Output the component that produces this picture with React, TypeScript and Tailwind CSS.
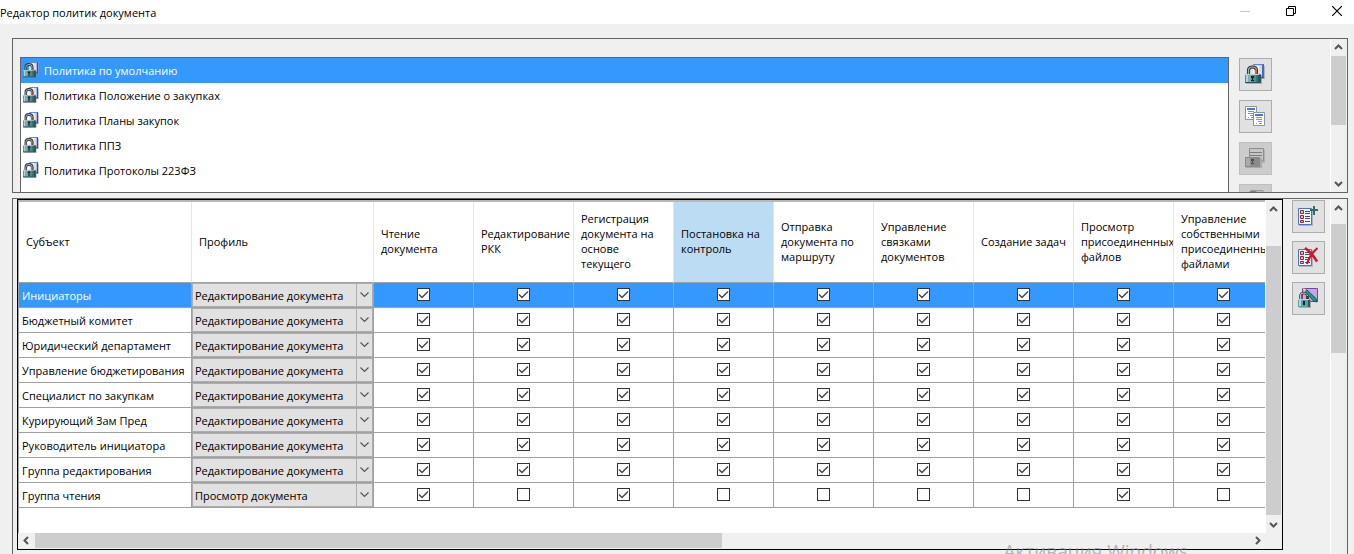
import React, { useState } from "react";

const policies = [
  "Политика по умолчанию",
  "Политика Положение о закупках",
  "Политика Планы закупок",
  "Политика ППЗ",
  "Политика Протоколы 223ФЗ",
];

const permissions = [
  "Чтение документа",
  "Редактирование РКК",
  "Регистрация документа на основе текущего",
  "Постановка на контроль",
  "Отправка документа по маршруту",
  "Управление связками документов",
  "Создание задач",
  "Просмотр присоединенных файлов",
  "Управление собственными присоединенными файлами",
];

const profiles = ["Редактирование документа", "Просмотр документа"];
const all = [true, true, true, true, true, true, true, true, true];

const subjects = [
  { name: "Инициаторы", profile: 0, rights: all },
  { name: "Бюджетный комитет", profile: 0, rights: all },
  { name: "Юридический департамент", profile: 0, rights: all },
  { name: "Управление бюджетирования", profile: 0, rights: all },
  { name: "Специалист по закупкам", profile: 0, rights: all },
  { name: "Курирующий Зам Пред", profile: 0, rights: all },
  { name: "Руководитель инициатора", profile: 0, rights: all },
  { name: "Группа редактирования", profile: 0, rights: all },
  {
    name: "Группа чтения",
    profile: 1,
    rights: [true, false, true, false, false, false, false, true, false],
  },
];

function LockIcon({ className }: { className: string }) {
  return (
    <svg viewBox="0 0 20 20" className={className} aria-hidden="true">
      <path d="M9 2h11v13H9z" fill="#8a8a8a" opacity=".5" />
      <path d="M8 0h11v14H8z" fill="#cfdffb" />
      <path d="M8 1h6v13H8z" fill="#eef4ff" />
      <path d="M18 0v13.500h-4" fill="none" stroke="#3348a8" strokeWidth="1.6" />
      <path d="M8 .6h10" stroke="#5d83dc" strokeWidth="1.2" />
      <path d="M10 5h3v6h-3z" fill="#e8601c" />
      <path d="M3.500 11V6.500Q3.500 3 7.500 3t4 3.500V11" fill="none" stroke="#30383a" strokeWidth="3.200" />
      <path d="M3.500 11V6.500Q3.500 3 7.500 3t4 3.500" fill="none" stroke="#a3b0b2" strokeWidth="1.200" />
      <path d="M10 6h2v4h-2z" fill="#e8601c" />
      <path d="M1 11h16v9H1z" fill="#777" opacity=".5" />
      <path d="M0 10h16v9H0z" fill="#4f8f90" />
      <path d="M0 10h14v1H0zM1 11h2v7H1z" fill="#b4d3d2" />
      <path d="M3 11h3v7H3z" fill="#7cb0b0" />
      <path d="M11 11h2v7h-2z" fill="#3c7475" />
      <path d="M13 11h3v8h-3zM0 18h15v1H0z" fill="#2a5557" />
      <path d="M6 12h3v2H8v2h1v1H6v-1h1v-2H6z" fill="#162528" />
    </svg>
  );
}

function CopyIcon() {
  const page = (
    <>
      <path d="M.5.500h11v13H.5z" fill="#fff" stroke="#8d949b" />
      <path d="M2 2h8v2H2z" fill="#3b82d4" />
      <path d="M3 5.500h6M3 7.500h6M5 9.500h4M3 11.500h1M6 11.500h3" stroke="#8f9499" />
    </>
  );
  return (
    <svg viewBox="0 0 20 20" className="size-5" aria-hidden="true">
      <g>{page}</g>
      <g transform="translate(8 6)">{page}</g>
    </svg>
  );
}

function DisabledLockIcon() {
  return (
    <svg viewBox="0 0 20 20" className="size-5" aria-hidden="true">
      <path d="M5 2h15v13H5z" fill="#b0b0b0" />
      <path d="M4.500.500h14v12h-14z" fill="#c6c6c6" stroke="#8c8c8c" />
      <path d="M5 4.500h12M5 7.500h12" stroke="#7d7d7d" />
      <path d="M1 10h16v10H1z" fill="#aaa" />
      <path d="M0 9h15v10H0z" fill="#8a8a8a" />
      <path d="M1 10h4v8H1z" fill="#aaa" />
      <path d="M6 11h3v2H8v2h1v1H6v-1h1v-2H6z" fill="#4f4f4f" />
    </svg>
  );
}

function DisabledRemoveIcon() {
  return (
    <svg viewBox="0 0 20 20" className="size-5" aria-hidden="true">
      <path d="M6 .5h12v13H6z" fill="#bcbcbc" stroke="#9a9a9a" />
      <path d="M3.500 11V6.500Q3.500 2 8 2t4 4.500V11" fill="none" stroke="#7f7f7f" strokeWidth="2.500" />
      <path d="M0 10h15v9H0z" fill="#8a8a8a" />
    </svg>
  );
}

function ListIcon({ remove = false }: { remove?: boolean }) {
  return (
    <svg viewBox="0 0 20 20" className="size-5" aria-hidden="true">
      <path d="M1 3h14v17H1z" fill="#8e94a8" opacity=".6" />
      <path d="M.5 2.500h13v16H.5z" fill="#f0f5ff" stroke="#4b72c4" />
      <path d="M2.500 4.500h3v3h-3zM2.500 9.500h3v3h-3zM2.500 14.500h3v2h-3z" fill="#e8b7ad" stroke="#8c2f2c" />
      <path d="M7 5.500h5M7 7.500h5M7 10.500h5M7 12.500h5M7 15.500h5" stroke="#404c77" />
      {remove ? (
        <>
          <path d="M7 1Q14 6 19 14.500" fill="none" stroke="#d3142a" strokeWidth="2.600" />
          <path d="M19.500 1Q12 7 9 17" fill="none" stroke="#d3142a" strokeWidth="2.200" />
        </>
      ) : (
        <path d="M16 0v9M12 4h8" stroke="#2c6f66" strokeWidth="2" />
      )}
    </svg>
  );
}

function LockEditIcon() {
  return (
    <svg viewBox="0 0 20 20" className="size-5" aria-hidden="true">
      <path d="M4.500.500h15v13h-15z" fill="#c9a5e6" stroke="#7b3fa5" />
      <path d="M8 6h3v5H8z" fill="#e8601c" />
      <path d="M2.500 12V8q0-3 3.500-3t3.500 3v4" fill="none" stroke="#30383a" strokeWidth="2.600" />
      <path d="M2.500 12V8q0-3 3.500-3t3.500 3" fill="none" stroke="#b8c4c6" strokeWidth="1.200" />
      <path d="M8.500 1.500L18 10.500l1 3.500-3.500-1L7 3.500z" fill="#1a9a8a" stroke="#14423f" strokeWidth=".8" />
      <path d="M5 0l3.500 1.500-2 2.500z" fill="#f0d27b" />
      <path d="M1 12h12v8H1z" fill="#777" opacity=".5" />
      <path d="M0 11h12v8H0z" fill="#5ea3a3" />
      <path d="M0 11h11v1H0zM1 12h2v6H1z" fill="#b5dad9" />
      <path d="M10 12h2v7h-2z" fill="#2a5a5d" />
      <path d="M5 13h2v4H5z" fill="#162528" />
    </svg>
  );
}

function Arrow({ dir }: { dir: "up" | "down" | "left" | "right" }) {
  const d = {
    up: "M1 6l3.500-3.500L8 6",
    down: "M1 3l3.500 3.500L8 3",
    left: "M6 1L2.500 4.500 6 8",
    right: "M3 1l3.500 3.500L3 8",
  }[dir];
  return (
    <svg viewBox="0 0 9 9" className="size-[9px]" aria-hidden="true">
      <path d={d} fill="none" stroke="#555" strokeWidth="2" />
    </svg>
  );
}

function ToolButton({
  label,
  disabled = false,
  children,
}: {
  label: string;
  disabled?: boolean;
  children?: React.ReactNode;
}) {
  return (
    <button
      type="button"
      aria-label={label}
      disabled={disabled}
      className="flex size-[33px] shrink-0 items-center border border-[#adadad] bg-[#e1e1e1] pb-px pl-[5px] disabled:border-[#bfbfbf] disabled:bg-[#cccccc]"
    >
      {children}
    </button>
  );
}

function Check({ label, initial }: { label: string; initial: boolean }) {
  return (
    <label className="mx-auto grid size-[13px]">
      <input
        type="checkbox"
        aria-label={label}
        defaultChecked={initial}
        className="peer col-start-1 row-start-1 size-[13px] appearance-none border border-[#333333] bg-white"
      />
      <svg
        viewBox="0 0 13 13"
        className="pointer-events-none invisible col-start-1 row-start-1 size-[13px] peer-checked:visible"
        aria-hidden="true"
      >
        <path d="M2 6.500l3 3L11 3.500" fill="none" stroke="#444" strokeWidth="1.400" />
      </svg>
    </label>
  );
}

export default function App() {
  const [policy, setPolicy] = useState(0);
  const [row, setRow] = useState(0);

  return (
    <div className="flex h-screen flex-col overflow-hidden bg-[#f0f0f0] font-['Open_Sans','Noto_Sans',sans-serif] text-[11px] leading-4 text-black">
      <header className="flex h-6 shrink-0 items-center justify-between bg-white">
        <h1 className="pt-0.5">Редактор политик документа</h1>
        <div className="flex h-full items-start gap-3">
          <button type="button" aria-label="Свернуть" className="flex h-[22px] w-[34px] items-center justify-center">
            <svg viewBox="0 0 10 10" className="size-2.5" aria-hidden="true">
              <path d="M0 5.500h10" stroke="#c4c4c4" />
            </svg>
          </button>
          <button type="button" aria-label="Восстановить" className="flex h-[22px] w-[34px] items-center justify-center">
            <svg viewBox="0 0 10 10" className="size-2.5" fill="none" stroke="#000" aria-hidden="true">
              <path d="M.5 2.500h7v7h-7zM2.500 2.500v-2h7v7h-2" />
            </svg>
          </button>
          <button type="button" aria-label="Закрыть" className="flex h-[22px] w-[34px] items-center justify-center">
            <svg viewBox="0 0 10 10" className="size-2.5" stroke="#000" strokeWidth="1.200" aria-hidden="true">
              <path d="M0 0l10 10M10 0L0 10" />
            </svg>
          </button>
        </div>
      </header>

      <section className="mt-3.5 mr-1.5 ml-3 flex h-[155px] shrink-0 overflow-hidden border border-[#646464] pl-[7px]">
        <ul className="mt-[18px] min-w-0 flex-1 border border-b-0 border-[#646464] bg-white">
          {policies.map((name, i) => (
            <li key={name}>
              <button
                type="button"
                onClick={() => setPolicy(i)}
                className={`flex h-[25px] w-full items-center gap-[5px] pl-0.5 text-left ${
                  policy === i ? "bg-[#3399ff] text-white" : ""
                }`}
              >
                <LockIcon className="mb-0.5 size-4" />
                {name}
              </button>
            </li>
          ))}
        </ul>
        <div className="mt-[19px] mr-[58px] ml-2.5 flex flex-col gap-[9px]">
          <ToolButton label="Добавить политику">
            <LockIcon className="size-5" />
          </ToolButton>
          <ToolButton label="Копировать политику">
            <CopyIcon />
          </ToolButton>
          <ToolButton label="Изменить политику" disabled>
            <DisabledLockIcon />
          </ToolButton>
          <ToolButton label="Удалить политику" disabled>
            <DisabledRemoveIcon />
          </ToolButton>
        </div>
        <div className="flex w-[17px] shrink-0 flex-col items-start border-l border-white">
          <div className="flex h-[17px] w-[15px] items-center justify-center">
            <Arrow dir="up" />
          </div>
          <div className="h-[69px] w-[15px] bg-[#cdcdcd]" />
          <div className="mt-auto flex h-[17px] w-[15px] items-center justify-center">
            <Arrow dir="down" />
          </div>
        </div>
      </section>

      <section className="mt-[5px] mr-1.5 ml-3 flex min-h-0 flex-1 items-start border border-b-0 border-[#646464] pl-1">
        <div className="min-w-0 flex-1 border border-black bg-white">
          <div className="flex">
            <div className="min-w-0 flex-1 overflow-hidden border-t-2 border-l border-t-[#b8b8b8] border-l-[#a0a0a0] pb-[25px]">
              <table className="w-[1255px] table-fixed border-separate border-spacing-0">
                <colgroup>
                  <col className="w-[173px]" />
                  <col className="w-[182px]" />
                  {permissions.map((p) => (
                    <col key={p} className="w-[100px]" />
                  ))}
                </colgroup>
                <thead>
                  <tr className="h-[81px] text-left leading-[15px]">
                    {["Субъект", "Профиль", ...permissions].map((title) => (
                      <th
                        key={title}
                        scope="col"
                        className={`overflow-hidden border-r border-b border-r-[#e5e5e5] border-b-[#a0a0a0] p-0 pr-1 pb-0.5 pl-[7px] font-normal ${
                          title === "Постановка на контроль" ? "bg-[#bcdcf4]" : ""
                        }`}
                      >
                        {title}
                      </th>
                    ))}
                  </tr>
                </thead>
                <tbody>
                  {subjects.map((s, i) => (
                    <tr
                      key={s.name}
                      onClick={() => setRow(i)}
                      className={`h-[25px] ${row === i ? "bg-[#3399ff]" : ""}`}
                    >
                      <th
                        scope="row"
                        className={`border-r border-b border-[#a0a0a0] p-0 pt-0.5 pl-[3px] text-left font-normal whitespace-nowrap ${
                          row === i ? "text-white" : ""
                        }`}
                      >
                        {s.name}
                      </th>
                      <td className="border-r border-b border-[#a0a0a0] p-0">
                        <div className="grid h-6 border border-[#adadad] bg-[#e1e1e1]">
                          <select
                            aria-label={`Профиль: ${s.name}`}
                            defaultValue={profiles[s.profile]}
                            className="col-start-1 row-start-1 w-full appearance-none pt-0.5 pl-0.5"
                          >
                            {profiles.map((p) => (
                              <option key={p}>{p}</option>
                            ))}
                          </select>
                          <span className="pointer-events-none col-start-1 row-start-1 flex w-4 items-center justify-center justify-self-end border-l border-[#adadad]">
                            <svg viewBox="0 0 9 6" className="h-1.5 w-[9px]" aria-hidden="true">
                              <path d="M.5.500l4 4 4-4" fill="none" stroke="#555" strokeWidth="1.200" />
                            </svg>
                          </span>
                        </div>
                      </td>
                      {s.rights.map((on, k) => (
                        <td key={permissions[k]} className="border-r border-b border-[#a0a0a0] p-0 pb-0.5">
                          <Check label={`${s.name}: ${permissions[k]}`} initial={on} />
                        </td>
                      ))}
                    </tr>
                  ))}
                </tbody>
              </table>
            </div>
            <div className="flex w-[17px] shrink-0 flex-col items-start border-l border-white bg-[#f0f0f0]">
              <div className="flex h-[46px] w-[15px] justify-center pt-[5px]">
                <Arrow dir="up" />
              </div>
              <div className="w-[15px] flex-1 bg-[#cdcdcd]" />
              <div className="flex h-[18px] w-[15px] items-center justify-center">
                <Arrow dir="down" />
              </div>
            </div>
          </div>
          <div className="flex h-4 items-start bg-[#f0f0f0] pr-5 pl-1">
            <div className="flex h-[15px] items-center">
              <Arrow dir="left" />
            </div>
            <div className="mr-auto ml-1 h-[15px] w-[687px] bg-[#cdcdcd]" />
            <div className="flex h-[15px] items-center">
              <Arrow dir="right" />
            </div>
          </div>
        </div>
        <div className="mt-px mr-[5px] ml-[9px] flex flex-col gap-2">
          <ToolButton label="Добавить субъект">
            <ListIcon />
          </ToolButton>
          <ToolButton label="Удалить субъект">
            <ListIcon remove />
          </ToolButton>
          <ToolButton label="Изменить права">
            <LockEditIcon />
          </ToolButton>
        </div>
        <div className="flex w-[17px] shrink-0 flex-col items-start self-stretch border-l border-white">
          <div className="flex h-[25px] w-[15px] items-start justify-center pt-[5px]">
            <Arrow dir="up" />
          </div>
          <div className="h-[129px] w-[15px] bg-[#cdcdcd]" />
        </div>
      </section>

      <p className="pointer-events-none absolute right-[166px] bottom-0 h-[15px] overflow-hidden text-[19px] leading-6 text-[#8a8a8a]/60">
        Активация Windows
      </p>
    </div>
  );
}
